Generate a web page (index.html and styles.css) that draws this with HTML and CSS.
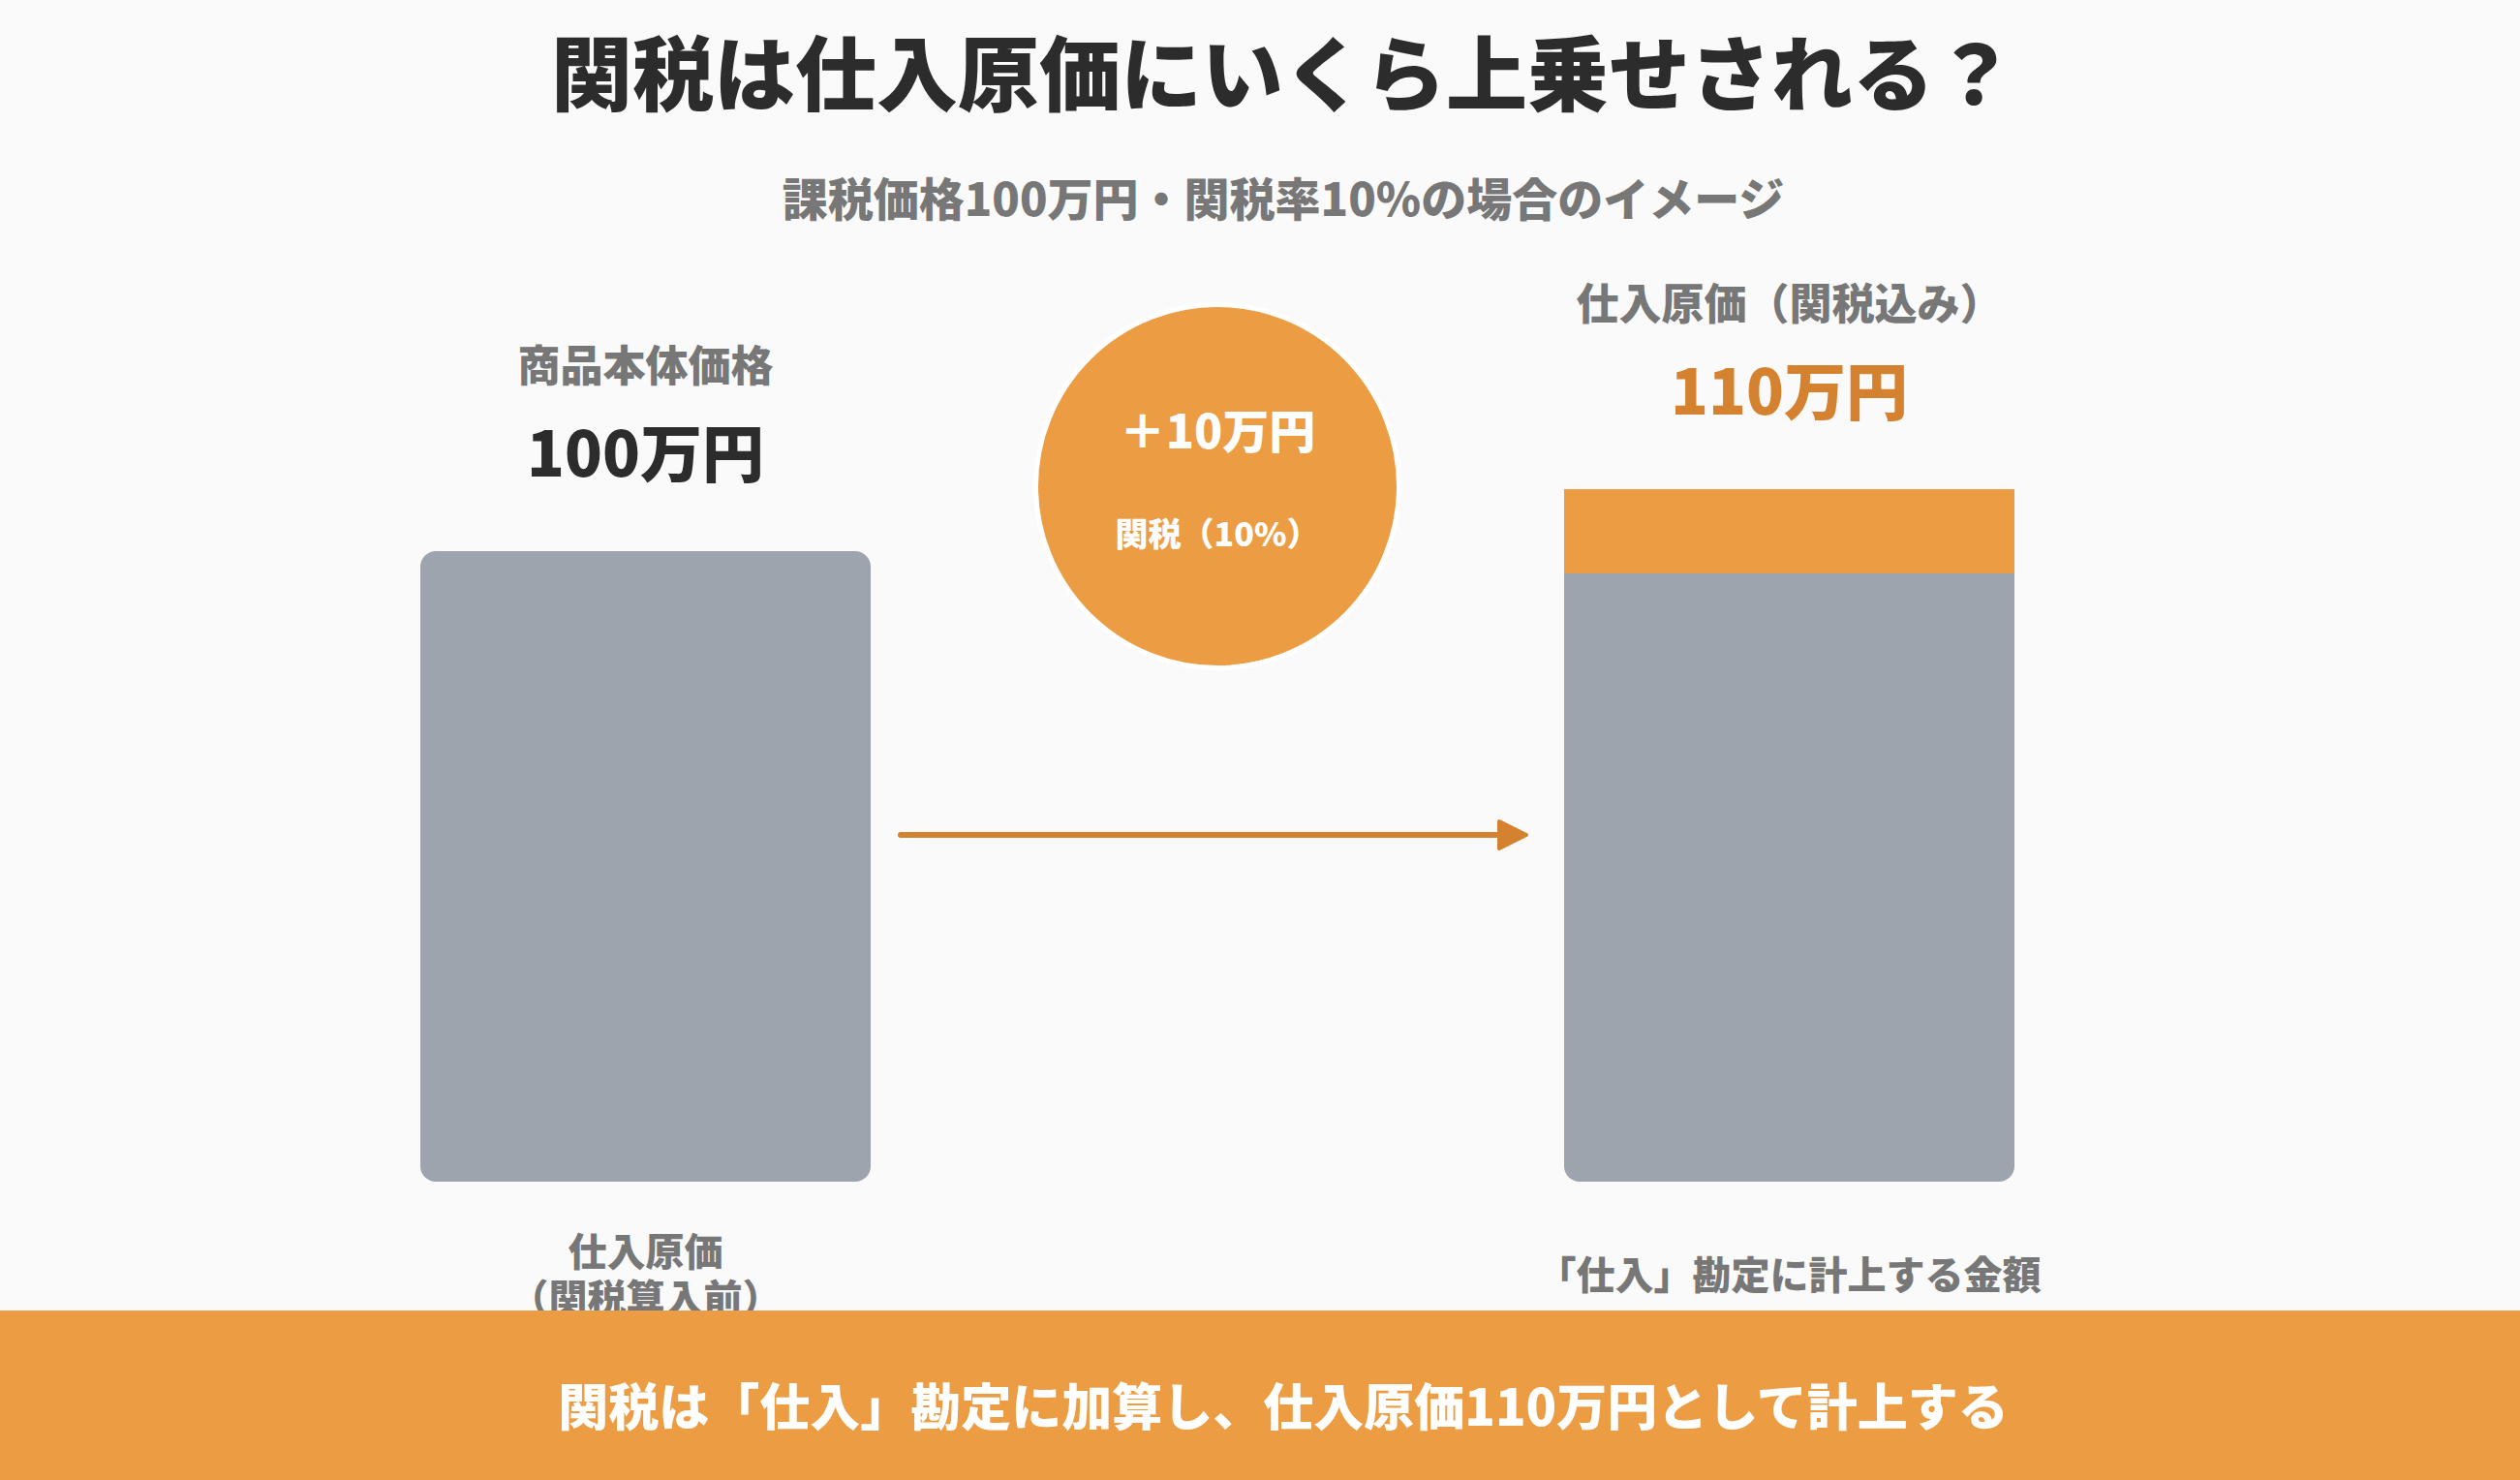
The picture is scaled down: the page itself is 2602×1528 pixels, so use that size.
FILE: index.html
```html
<!DOCTYPE html>
<html lang="ja">
<head>
<meta charset="utf-8">
<title>関税は仕入原価にいくら上乗せされる？</title>
<link rel="stylesheet" href="styles.css">
</head>
<body>
<main class="main">
  <header class="heading">
    <h1 class="title">関税は仕入原価にいくら上乗せされる？</h1>
    <p class="subtitle">課税価格100万円・関税率10%の場合のイメージ</p>
  </header>
  <section class="chart">
    <div class="col">
      <div class="label">商品本体価格</div>
      <div class="value">100万円</div>
      <div class="bar bar-base"></div>
    </div>
    <div class="mid">
      <div class="badge">
        <div class="badge-main">＋10万円</div>
        <div class="badge-sub">関税（10%）</div>
      </div>
      <svg class="arrow" width="716" height="36" viewBox="0 0 716 36">
        <line x1="31" y1="18" x2="650" y2="18" stroke="#d4822f" stroke-width="6" stroke-linecap="round"/>
        <polygon points="649,4 677,18 649,32" fill="#d4822f" stroke="#d4822f" stroke-width="4" stroke-linejoin="round"/>
      </svg>
    </div>
    <div class="col">
      <div class="label">仕入原価（関税込み）</div>
      <div class="value value-accent">110万円</div>
      <div class="stack">
        <div class="seg-tax"></div>
        <div class="seg-base"></div>
      </div>
    </div>
    <div class="caption">仕入原価<br>（関税算入前）</div>
    <div class="caption caption-right">「仕入」勘定に計上する金額</div>
  </section>
</main>
<footer class="footer">関税は「仕入」勘定に加算し、仕入原価110万円として計上する</footer>
</body>
</html>
```
FILE: styles.css
```css
html, body {
  margin: 0;
  padding: 0;
}
body {
  height: 100vh;
  display: flex;
  flex-direction: column;
  overflow: hidden;
  background: #fafafa;
  font-family: "Noto Sans CJK JP", "Noto Sans", sans-serif;
  font-weight: 900;
  color: #2c2c2c;
}
.main {
  flex: 1;
  min-height: 0;
}
.heading {
  padding-left: 48px;
  text-align: center;
}
.title {
  margin: 22px 0 0;
  font-size: 84px;
  line-height: 1.2;
  font-weight: 900;
  color: #2c2c2c;
}
.subtitle {
  margin: 52px 0 0;
  font-size: 47px;
  line-height: 1.2;
  color: #777777;
}
.chart {
  margin-top: 54px;
  padding-left: 434px;
  display: grid;
  grid-template-columns: 465px 716px 465px;
  align-items: end;
  row-gap: 46px;
}
.col {
  display: flex;
  flex-direction: column;
  align-items: center;
}
.label {
  font-size: 44px;
  line-height: 1.2;
  color: #777777;
  white-space: nowrap;
}
.value {
  margin-top: 24px;
  font-size: 64px;
  line-height: 1.2;
  color: #2c2c2c;
}
.value-accent {
  color: #d4822f;
}
.bar {
  margin-top: 66px;
  width: 465px;
  height: 651px;
  border-radius: 16px;
}
.bar-base {
  background: #9ea4ad;
}
.stack {
  margin-top: 66px;
  width: 465px;
  display: flex;
  flex-direction: column;
  border-radius: 0 0 16px 16px;
  overflow: hidden;
}
.seg-tax {
  height: 87px;
  background: #ec9c42;
}
.seg-base {
  height: 628px;
  background: #9ea4ad;
}
.mid {
  display: flex;
  flex-direction: column;
  align-items: center;
}
.badge {
  box-sizing: border-box;
  width: 380px;
  height: 380px;
  border-radius: 50%;
  border: 5px solid #ffffff;
  background: #ec9c42;
  color: #ffffff;
  display: flex;
  flex-direction: column;
  align-items: center;
  justify-content: center;
  padding-bottom: 19px;
}
.badge-main {
  font-size: 48px;
  line-height: 1.2;
}
.badge-sub {
  margin-top: 59px;
  font-size: 34px;
  line-height: 1.2;
}
.arrow {
  display: block;
  margin-top: 152px;
  margin-bottom: 340px;
}
.caption {
  grid-column: 1;
  align-self: center;
  text-align: center;
  font-size: 40px;
  line-height: 48px;
  color: #777777;
}
.caption-right {
  grid-column: 3;
  justify-self: center;
  white-space: nowrap;
}
.footer {
  position: relative;
  box-sizing: border-box;
  height: 175px;
  flex: none;
  background: #ec9c42;
  color: #ffffff;
  display: flex;
  align-items: center;
  justify-content: center;
  padding: 20px 0 0 48px;
  font-size: 52px;
  line-height: 1.2;
}
```
